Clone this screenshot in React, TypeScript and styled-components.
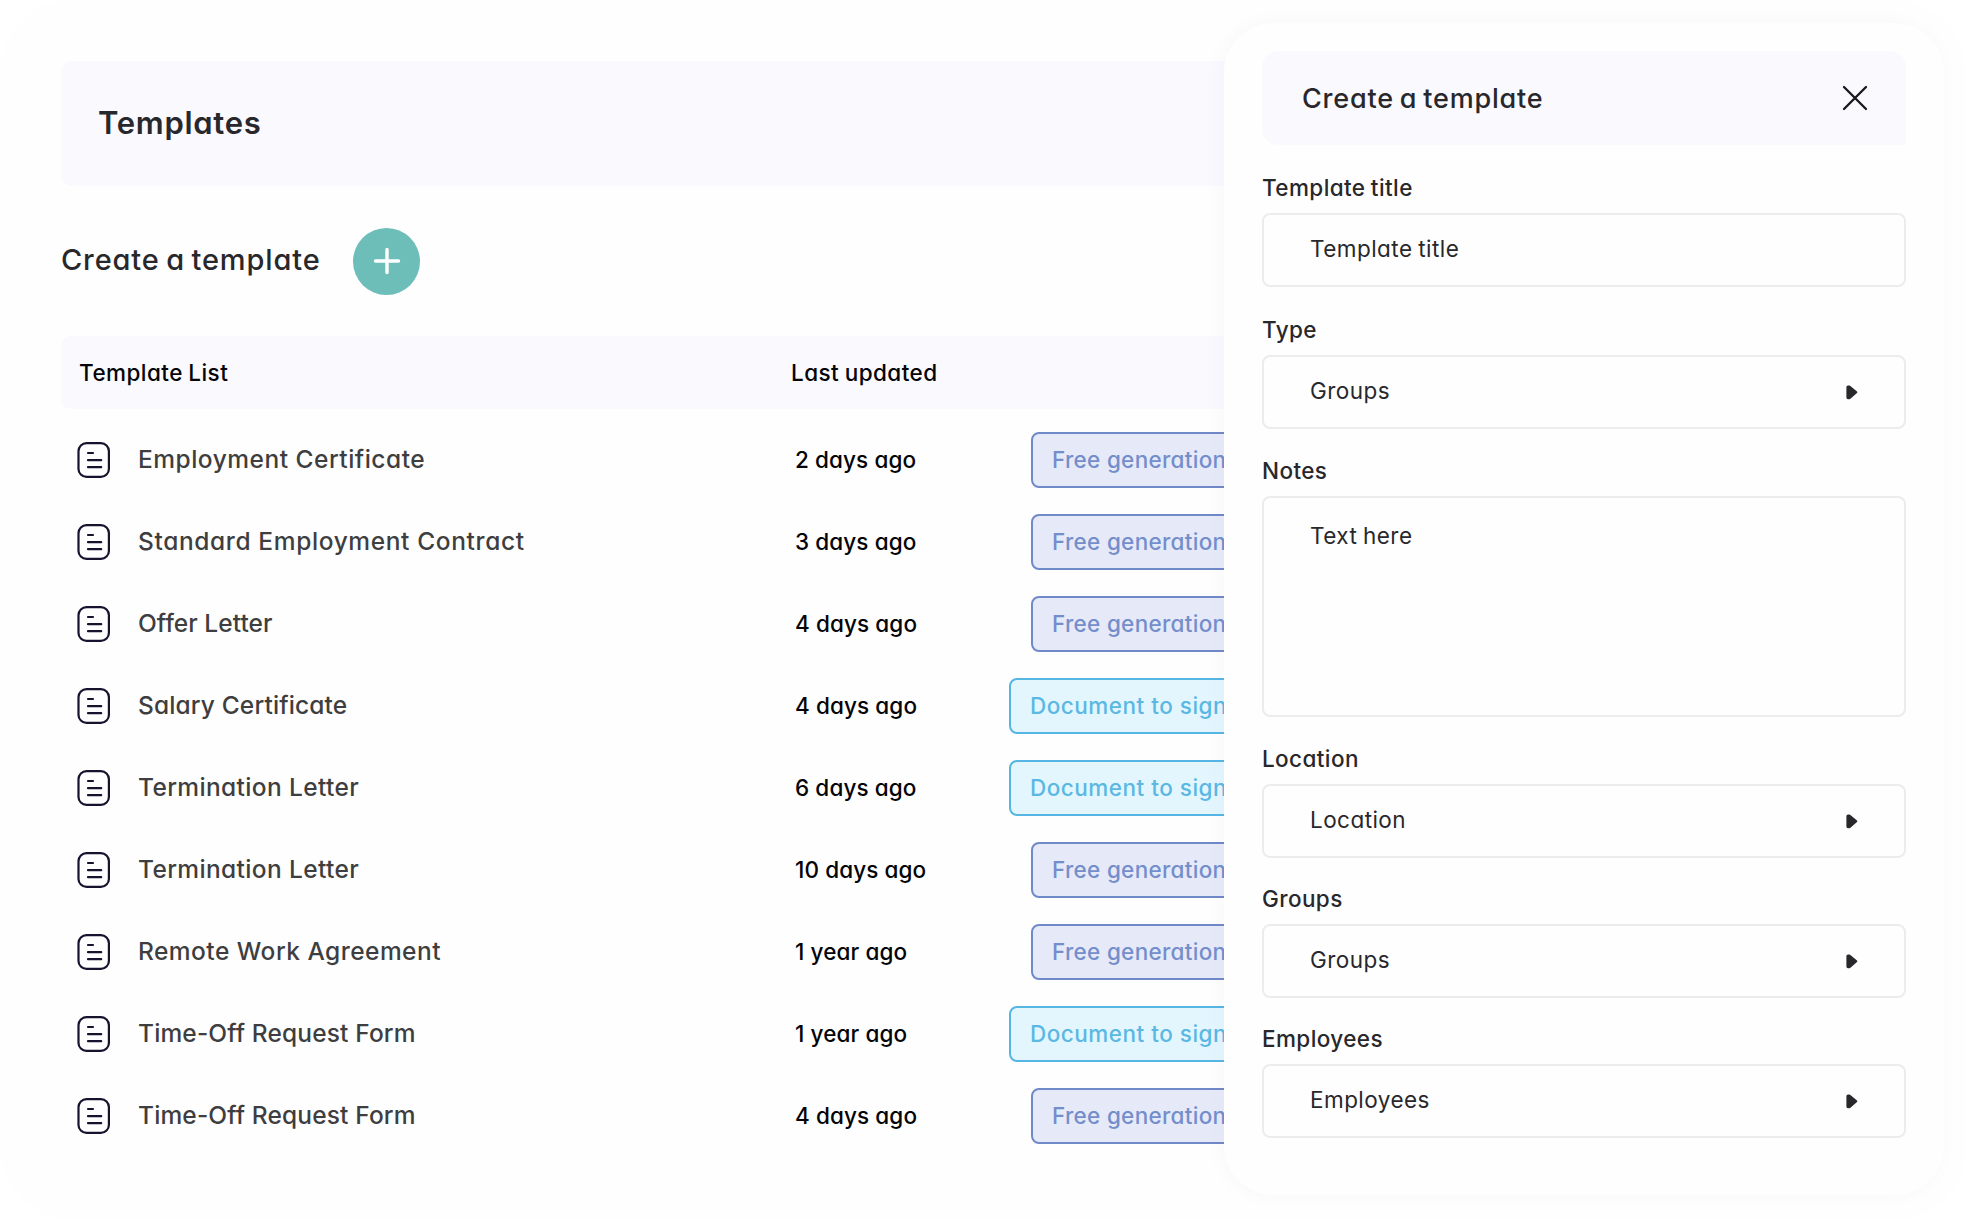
import React from 'react';
import styled, { createGlobalStyle } from 'styled-components';

type TagKind = 'free' | 'sign';

const GlobalStyle = createGlobalStyle`
  * {
    box-sizing: border-box;
  }
  body {
    margin: 0;
    background: #ffffff;
    color: #28282c;
    font-family: Inter, "Open Sans", sans-serif;
    font-feature-settings: "cv11" 1;
  }
  h1, h2, p {
    margin: 0;
  }
`;

const Page = styled.div`
  position: relative;
  width: 1966px;
  height: 1220px;
  padding: 61px 0 0 61px;
  border-radius: 72px;
  background: #fefefe;
  overflow: hidden;
`;
const Main = styled.main`
  width: 1185px;
`;
const TitleBar = styled.header`
  display: flex;
  align-items: center;
  height: 125px;
  padding: 0 0 2px 37px;
  border-radius: 12px;
  background: #faf9fe;
  h1 {
    font-size: 31px;
    font-weight: 600;
    line-height: 40px;
    letter-spacing: 0.7px;
  }
`;
const CreateRow = styled.div`
  display: flex;
  align-items: center;
  height: 150px;
  h2 {
    width: 292px;
    padding-bottom: 3px;
    font-size: 29px;
    font-weight: 500;
    letter-spacing: 0.85px;
    word-spacing: -2px;
    white-space: nowrap;
  }
`;
const AddButton = styled.button`
  display: flex;
  align-items: center;
  justify-content: center;
  width: 67px;
  height: 67px;
  padding: 0;
  border: none;
  border-radius: 50%;
  background: #6dbdb9;
  cursor: pointer;
`;
const ListHead = styled.div`
  display: flex;
  align-items: center;
  height: 73px;
  padding: 0 0 1px 18px;
  border-radius: 10px;
  background: #faf9fe;
  color: #050508;
  font-size: 22.5px;
  font-weight: 500;
  letter-spacing: 0.45px;
  word-spacing: -1px;
  span:first-child {
    width: 712px;
  }
`;
const List = styled.div`
  padding-top: 10px;
`;
const Row = styled.div`
  display: flex;
  align-items: center;
  height: 82px;
  padding-left: 16px;
`;
const DocSvg = styled.svg`
  width: 33px;
  height: 36px;
  flex: none;
`;
const Name = styled.p<{ $tracking: number }>`
  flex: none;
  width: 685px;
  padding: 0 0 2px 28px;
  color: #3e3e41;
  font-size: 24.5px;
  font-weight: 500;
  letter-spacing: ${(p) => p.$tracking}px;
`;
const Updated = styled.p`
  flex: none;
  width: 150px;
  padding-bottom: 2px;
  color: #050508;
  font-size: 22.5px;
  font-weight: 500;
  letter-spacing: 0.1px;
  white-space: nowrap;
`;
const Tag = styled.span<{ $kind: TagKind }>`
  display: flex;
  align-items: center;
  flex: none;
  width: ${(p) => (p.$kind === 'free' ? 215 : 237)}px;
  height: 56px;
  margin-left: auto;
  padding: 0 0 2px 19px;
  border: 2px solid ${(p) => (p.$kind === 'free' ? '#7089c8' : '#55b6e4')};
  border-radius: 8px;
  background: ${(p) => (p.$kind === 'free' ? '#e6eaf8' : '#e3f6fe')};
  color: ${(p) => (p.$kind === 'free' ? '#748ecb' : '#5ab8e3')};
  font-size: 22.5px;
  font-weight: 500;
  letter-spacing: ${(p) => (p.$kind === 'free' ? 0.3 : 0.5)}px;
  white-space: nowrap;
`;

// Drawer that slides over the list
const Drawer = styled.aside`
  position: absolute;
  top: 23px;
  left: 1224px;
  width: 720px;
  height: 1172px;
  padding: 28px 38px 0 38px;
  border-radius: 50px;
  background: #fefefe;
  box-shadow: -3px 0 20px rgba(90, 50, 140, 0.03);
`;
const DrawerHead = styled.div`
  display: flex;
  align-items: center;
  justify-content: space-between;
  height: 94px;
  padding: 0 38px 0 40px;
  border-radius: 16px 16px 0 16px;
  background: #faf9fe;
  h2 {
    font-size: 27px;
    font-weight: 500;
    letter-spacing: 0.8px;
    word-spacing: -2px;
  }
`;
const CloseButton = styled.button`
  display: flex;
  padding: 0;
  border: none;
  background: none;
  cursor: pointer;
`;
const Field = styled.div<{ $gap?: number }>`
  padding-top: ${(p) => p.$gap ?? 25}px;
`;
const Label = styled.label`
  display: block;
  height: 41px;
  font-size: 22.5px;
  font-weight: 500;
  line-height: 31px;
  letter-spacing: 0.4px;
  word-spacing: -1px;
`;
const Control = styled.div<{ $tall?: boolean }>`
  display: flex;
  align-items: ${(p) => (p.$tall ? 'flex-start' : 'center')};
  justify-content: space-between;
  height: ${(p) => (p.$tall ? 221 : 74)}px;
  padding: ${(p) => (p.$tall ? '23px' : '0')} 46px 0 46px;
  border: 2px solid #ececee;
  border-radius: 8px;
  font-size: 22.5px;
  line-height: 30px;
  letter-spacing: 0.45px;
  word-spacing: -1px;
  span {
    padding-bottom: 2px;
  }
`;

const DocIcon = () => (
  <DocSvg viewBox="0 0 33 36" fill="none" stroke="#17122e" strokeWidth="2.2" strokeLinecap="round">
    <rect x="1.5" y="1.1" width="30.4" height="33.8" rx="8" />
    <path d="M11 11H16M11 18.2H24.2M11 25.2H24.2" />
  </DocSvg>
);

const Arrow = () => (
  <svg width="12" height="15" viewBox="0 0 12 15">
    <path d="M2 .4Q.4.4.4 2V12.6Q.4 14.2 2 14.2H3.2Q4 14.2 5 13.2L11 8.1Q11.8 7.3 11 6.5L5 1.4Q4 .4 3.2.4Z" fill="#28282c" />
  </svg>
);

const templates: { name: string; updated: string; kind: TagKind; tracking: number }[] = [
  { name: 'Employment Certificate', updated: '2 days ago', kind: 'free', tracking: 0.5 },
  { name: 'Standard Employment Contract', updated: '3 days ago', kind: 'free', tracking: 0.62 },
  { name: 'Offer Letter', updated: '4 days ago', kind: 'free', tracking: 0.04 },
  { name: 'Salary Certificate', updated: '4 days ago', kind: 'sign', tracking: 0.14 },
  { name: 'Termination Letter', updated: '6 days ago', kind: 'sign', tracking: 0.36 },
  { name: 'Termination Letter', updated: '10 days ago', kind: 'free', tracking: 0.36 },
  { name: 'Remote Work Agreement', updated: '1 year ago', kind: 'free', tracking: 0.47 },
  { name: 'Time-Off Request Form', updated: '1 year ago', kind: 'sign', tracking: 0.14 },
  { name: 'Time-Off Request Form', updated: '4 days ago', kind: 'free', tracking: 0.14 },
];

const fields = [
  { label: 'Template title', value: 'Template title', gap: 27 },
  { label: 'Type', value: 'Groups', select: true, gap: 27 },
  { label: 'Notes', value: 'Text here', tall: true, gap: 26 },
  { label: 'Location', value: 'Location', select: true, gap: 26 },
  { label: 'Groups', value: 'Groups', select: true },
  { label: 'Employees', value: 'Employees', select: true },
];

const App = () => {
  return (
    <>
      <GlobalStyle />
      <Page>
        <Main>
          <TitleBar>
            <h1>Templates</h1>
          </TitleBar>
          <CreateRow>
            <h2>Create a template</h2>
            <AddButton aria-label="Create a template">
              <svg width="28" height="28" viewBox="0 0 28 28" stroke="#fff" strokeWidth="3.4" strokeLinecap="round">
                <path d="M14 2.5V25.5M2.5 14H25.5" />
              </svg>
            </AddButton>
          </CreateRow>
          <ListHead>
            <span>Template List</span>
            <span>Last updated</span>
          </ListHead>
          <List>
            {templates.map((item, i) => (
              <Row key={i}>
                <DocIcon />
                <Name $tracking={item.tracking}>{item.name}</Name>
                <Updated>{item.updated}</Updated>
                <Tag $kind={item.kind}>{item.kind === 'free' ? 'Free generation' : 'Document to sign'}</Tag>
              </Row>
            ))}
          </List>
        </Main>
        <Drawer>
          <DrawerHead>
            <h2>Create a template</h2>
            <CloseButton aria-label="Close">
              <svg width="26" height="26" viewBox="0 0 26 26" stroke="#17171b" strokeWidth="2.3" strokeLinecap="round">
                <path d="M2 2L24 24M24 2L2 24" />
              </svg>
            </CloseButton>
          </DrawerHead>
          {fields.map((field) => (
            <Field key={field.label} $gap={field.gap}>
              <Label>{field.label}</Label>
              <Control $tall={field.tall}>
                <span>{field.value}</span>
                {field.select && <Arrow />}
              </Control>
            </Field>
          ))}
        </Drawer>
      </Page>
    </>
  );
};

export default App;
